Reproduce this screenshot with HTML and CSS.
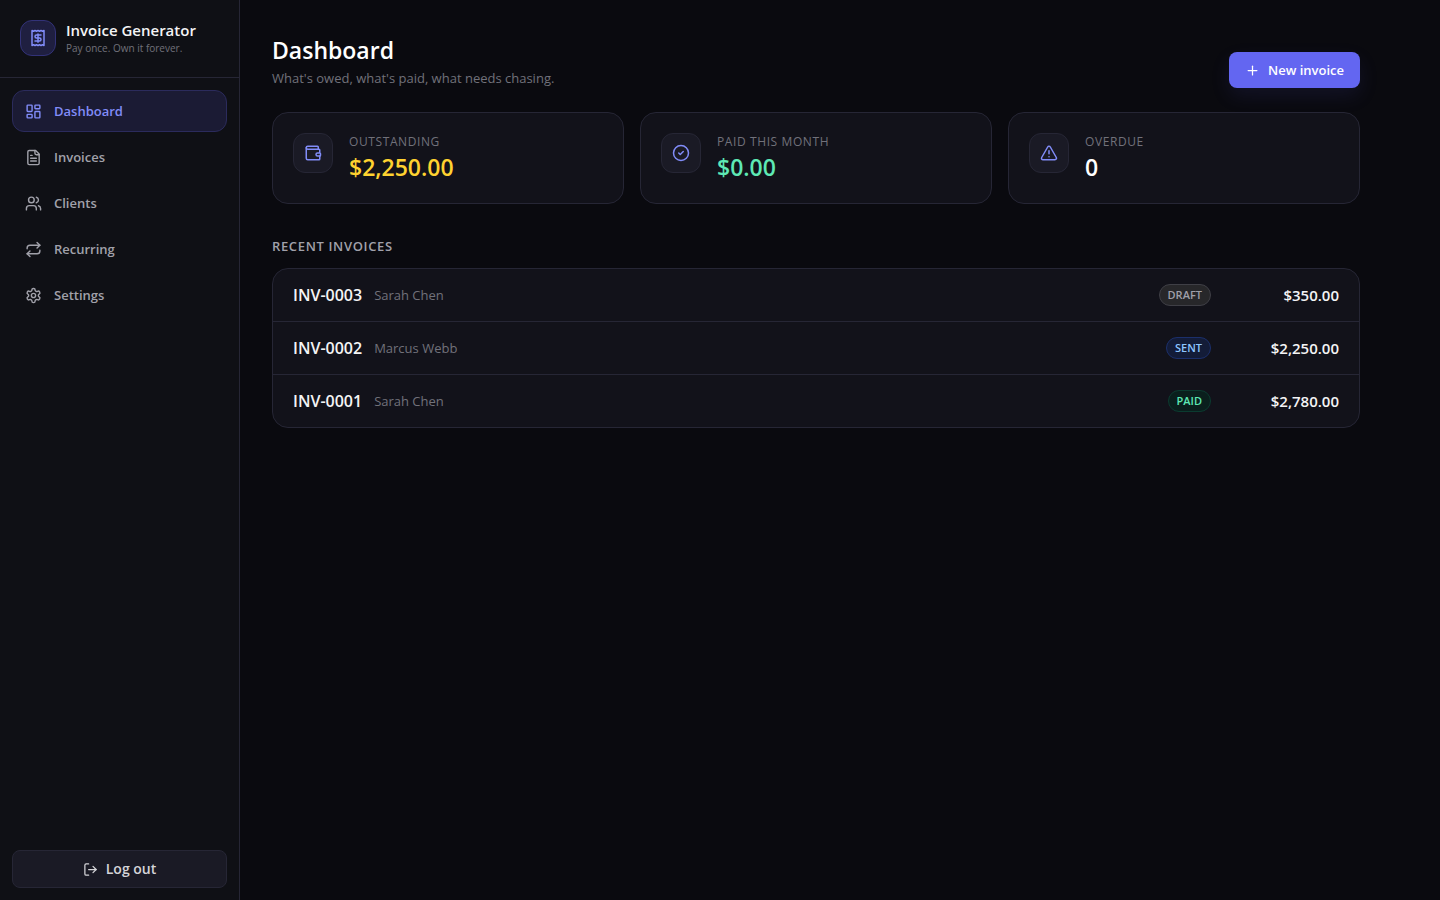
FILE: index.html
```html
<!DOCTYPE html>
<html lang="en">
<head>
  <meta charset="UTF-8" />
  <meta name="viewport" content="width=device-width, initial-scale=1" />
  <title>Dashboard - Invoice Generator</title>
  <link rel="stylesheet" href="styles.css">
</head>
<body>
  <div class="app">
    <aside class="sidebar">
      <div class="brand">
        <div class="brand-icon">
          <svg class="icon" width="18" height="18" viewBox="0 0 24 24"><path d="M4 2v20l2-1 2 1 2-1 2 1 2-1 2 1 2-1 2 1V2l-2 1-2-1-2 1-2-1-2 1-2-1-2 1Z"/><path d="M16 8h-6a2 2 0 1 0 0 4h4a2 2 0 1 1 0 4H8"/><path d="M12 17.5v-11"/></svg>
        </div>
        <div>
          <div class="brand-name">Invoice Generator</div>
          <div class="brand-tagline">Pay once. Own it forever.</div>
        </div>
      </div>

      <nav class="nav">
        <a href="#" class="nav-link active" aria-current="page">
          <svg class="icon" width="17" height="17" viewBox="0 0 24 24"><rect width="7" height="9" x="3" y="3" rx="1"/><rect width="7" height="5" x="14" y="3" rx="1"/><rect width="7" height="9" x="14" y="12" rx="1"/><rect width="7" height="5" x="3" y="16" rx="1"/></svg>
          Dashboard
        </a>
        <a href="#" class="nav-link">
          <svg class="icon" width="17" height="17" viewBox="0 0 24 24"><path d="M15 2H6a2 2 0 0 0-2 2v16a2 2 0 0 0 2 2h12a2 2 0 0 0 2-2V7Z"/><path d="M14 2v4a2 2 0 0 0 2 2h4"/><path d="M10 9H8"/><path d="M16 13H8"/><path d="M16 17H8"/></svg>
          Invoices
        </a>
        <a href="#" class="nav-link">
          <svg class="icon" width="17" height="17" viewBox="0 0 24 24"><path d="M16 21v-2a4 4 0 0 0-4-4H6a4 4 0 0 0-4 4v2"/><circle cx="9" cy="7" r="4"/><path d="M22 21v-2a4 4 0 0 0-3-3.87"/><path d="M16 3.13a4 4 0 0 1 0 7.75"/></svg>
          Clients
        </a>
        <a href="#" class="nav-link">
          <svg class="icon" width="17" height="17" viewBox="0 0 24 24"><path d="m17 2 4 4-4 4"/><path d="M3 11v-1a4 4 0 0 1 4-4h14"/><path d="m7 22-4-4 4-4"/><path d="M21 13v1a4 4 0 0 1-4 4H3"/></svg>
          Recurring
        </a>
        <a href="#" class="nav-link">
          <svg class="icon" width="17" height="17" viewBox="0 0 24 24"><path d="M12.22 2h-.44a2 2 0 0 0-2 2v.18a2 2 0 0 1-1 1.73l-.43.25a2 2 0 0 1-2 0l-.15-.08a2 2 0 0 0-2.73.73l-.22.38a2 2 0 0 0 .73 2.73l.15.1a2 2 0 0 1 1 1.72v.51a2 2 0 0 1-1 1.74l-.15.09a2 2 0 0 0-.73 2.73l.22.38a2 2 0 0 0 2.73.73l.15-.08a2 2 0 0 1 2 0l.43.25a2 2 0 0 1 1 1.73V20a2 2 0 0 0 2 2h.44a2 2 0 0 0 2-2v-.18a2 2 0 0 1 1-1.73l.43-.25a2 2 0 0 1 2 0l.15.08a2 2 0 0 0 2.73-.73l.22-.39a2 2 0 0 0-.73-2.73l-.15-.08a2 2 0 0 1-1-1.74v-.5a2 2 0 0 1 1-1.74l.15-.09a2 2 0 0 0 .73-2.73l-.22-.38a2 2 0 0 0-2.73-.73l-.15.08a2 2 0 0 1-2 0l-.43-.25a2 2 0 0 1-1-1.73V4a2 2 0 0 0-2-2z"/><circle cx="12" cy="12" r="3"/></svg>
          Settings
        </a>
      </nav>

      <div class="sidebar-footer">
        <button type="button" class="btn btn-secondary">
          <svg class="icon" width="15" height="15" viewBox="0 0 24 24"><path d="M9 21H5a2 2 0 0 1-2-2V5a2 2 0 0 1 2-2h4"/><path d="m16 17 5-5-5-5"/><path d="M21 12H9"/></svg>
          Log out
        </button>
      </div>
    </aside>

    <main class="main">
      <header class="page-header">
        <div>
          <h1>Dashboard</h1>
          <p class="subtitle">What's owed, what's paid, what needs chasing.</p>
        </div>
        <button type="button" class="btn btn-primary">
          <svg class="icon" width="15" height="15" viewBox="0 0 24 24"><path d="M5 12h14"/><path d="M12 5v14"/></svg>
          New invoice
        </button>
      </header>

      <section class="stats">
        <div class="stat-card">
          <div class="stat-icon">
            <svg class="icon" width="18" height="18" viewBox="0 0 24 24"><path d="M19 7V4a1 1 0 0 0-1-1H5a2 2 0 0 0 0 4h15a1 1 0 0 1 1 1v4h-3a2 2 0 0 0 0 4h3a1 1 0 0 0 1-1v-2a1 1 0 0 0-1-1"/><path d="M3 5v14a2 2 0 0 0 2 2h15a1 1 0 0 0 1-1v-4"/></svg>
          </div>
          <div>
            <div class="stat-label">Outstanding</div>
            <div class="stat-value amber">$2,250.00</div>
          </div>
        </div>
        <div class="stat-card">
          <div class="stat-icon">
            <svg class="icon" width="18" height="18" viewBox="0 0 24 24"><circle cx="12" cy="12" r="10"/><path d="m9 12 2 2 4-4"/></svg>
          </div>
          <div>
            <div class="stat-label">Paid this month</div>
            <div class="stat-value green">$0.00</div>
          </div>
        </div>
        <div class="stat-card">
          <div class="stat-icon">
            <svg class="icon" width="18" height="18" viewBox="0 0 24 24"><path d="m21.73 18-8-14a2 2 0 0 0-3.48 0l-8 14A2 2 0 0 0 4 21h16a2 2 0 0 0 1.73-3"/><path d="M12 9v4"/><path d="M12 17h.01"/></svg>
          </div>
          <div>
            <div class="stat-label">Overdue</div>
            <div class="stat-value">0</div>
          </div>
        </div>
      </section>

      <h2>Recent invoices</h2>
      <div class="invoice-list">
        <a href="#" class="invoice-row">
          <span class="invoice-number">INV-0003</span>
          <span class="invoice-client">Sarah Chen</span>
          <span class="badge badge-draft">Draft</span>
          <span class="invoice-total">$350.00</span>
        </a>
        <a href="#" class="invoice-row">
          <span class="invoice-number">INV-0002</span>
          <span class="invoice-client">Marcus Webb</span>
          <span class="badge badge-sent">Sent</span>
          <span class="invoice-total">$2,250.00</span>
        </a>
        <a href="#" class="invoice-row">
          <span class="invoice-number">INV-0001</span>
          <span class="invoice-client">Sarah Chen</span>
          <span class="badge badge-paid">Paid</span>
          <span class="invoice-total">$2,780.00</span>
        </a>
      </div>
    </main>
  </div>
</body>
</html>
```

FILE: styles.css
```css
* {
  box-sizing: border-box;
}

body {
  margin: 0;
  background: #0a0a0f;
  color: #f4f4f5;
  font-family: 'Segoe UI', 'Open Sans', 'Noto Sans', sans-serif;
  font-size: 13px;
  line-height: 20px;
}

h1, h2, p {
  margin: 0;
}

a {
  color: inherit;
  text-decoration: none;
}

.icon {
  flex-shrink: 0;
  fill: none;
  stroke: currentColor;
  stroke-width: 2;
  stroke-linecap: round;
  stroke-linejoin: round;
}

.app {
  display: flex;
  min-height: 100vh;
}

/* Sidebar */
.sidebar {
  display: flex;
  flex-direction: column;
  flex-shrink: 0;
  width: 240px;
  background: #0f1015;
  border-right: 1px solid #262635;
}

.brand {
  display: flex;
  align-items: flex-start;
  gap: 10px;
  padding: 20px;
  border-bottom: 1px solid #262635;
}

.brand-icon {
  display: flex;
  align-items: center;
  justify-content: center;
  width: 36px;
  height: 36px;
  color: #818cf8;
  background: #1f1f40;
  border: 1px solid #323278;
  border-radius: 12px;
}

.brand-name {
  font-size: 15px;
  font-weight: 600;
  line-height: 20px;
}

.brand-tagline {
  color: #71717a;
  font-size: 10px;
  line-height: 17px;
}

.nav {
  display: flex;
  flex: 1;
  flex-direction: column;
  gap: 4px;
  padding: 12px;
}

.nav-link {
  display: flex;
  align-items: center;
  gap: 12px;
  height: 42px;
  padding: 0 12px;
  color: #a1a1aa;
  font-weight: 600;
  border: 1px solid transparent;
  border-radius: 12px;
}

.nav-link.active {
  color: #818cf8;
  background: #1b1b34;
  border-color: #2b2b5c;
}

.sidebar-footer {
  padding: 12px;
}

.btn {
  display: flex;
  align-items: center;
  justify-content: center;
  gap: 8px;
  padding: 8px 16px;
  font-family: inherit;
  font-size: 13px;
  font-weight: 600;
  line-height: 20px;
  border: none;
  border-radius: 8px;
  cursor: pointer;
}

.btn-primary {
  color: #fff;
  background: #6366f1;
  box-shadow: 0 8px 20px rgba(99, 102, 241, 0.1);
}

.btn-secondary {
  width: 100%;
  color: #d4d4d8;
  font-size: 14px;
  background: #1a1a25;
  border: 1px solid #262635;
}

/* Main */
.main {
  flex: 1;
  max-width: 1152px;
  padding: 32px;
}

.page-header {
  display: flex;
  align-items: flex-end;
  justify-content: space-between;
  margin-bottom: 24px;
}

h1 {
  color: #fff;
  font-size: 23px;
  font-weight: 600;
  line-height: 36px;
}

.subtitle {
  color: #71717a;
}

.stats {
  display: grid;
  grid-template-columns: repeat(3, 1fr);
  gap: 16px;
  margin-bottom: 32px;
}

.stat-card {
  display: flex;
  align-items: flex-start;
  gap: 16px;
  padding: 20px;
  background: #12121a;
  border: 1px solid #262635;
  border-radius: 16px;
}

.stat-icon {
  display: flex;
  align-items: center;
  justify-content: center;
  width: 40px;
  height: 40px;
  color: #818cf8;
  background: #1a1a25;
  border: 1px solid #262635;
  border-radius: 12px;
}

.stat-label {
  color: #71717a;
  font-size: 12px;
  font-weight: 500;
  line-height: 18px;
  letter-spacing: 0.05em;
  text-transform: uppercase;
}

.stat-value {
  color: #fff;
  font-size: 23px;
  font-weight: 600;
  line-height: 32px;
}

.amber {
  color: #ffd230;
}

.green {
  color: #5ee9b5;
}

h2 {
  margin-bottom: 12px;
  color: #a1a1aa;
  font-size: 13px;
  font-weight: 600;
  line-height: 20px;
  letter-spacing: 0.05em;
  text-transform: uppercase;
}

.invoice-list {
  overflow: hidden;
  background: #12121a;
  border: 1px solid #262635;
  border-radius: 16px;
}

.invoice-row {
  display: flex;
  align-items: center;
  gap: 12px;
  padding: 16px 20px;
  border-bottom: 1px solid #262635;
}

.invoice-row:last-child {
  border-bottom: none;
}

.invoice-number {
  font-size: 16px;
  font-weight: 600;
}

.invoice-client {
  flex: 1;
  color: #71717a;
}

.badge {
  margin: -1px 0;
  padding: 2px 8px;
  font-size: 11px;
  font-weight: 600;
  line-height: 16px;
  text-transform: uppercase;
  border: 1px solid;
  border-radius: 11px;
}

.badge-draft {
  color: #9f9fa9;
  background: #27272a;
  border-color: #3f3f46;
}

.badge-sent {
  color: #8ec5ff;
  background: #131c38;
  border-color: #1b2f6b;
}

.badge-paid {
  color: #5ee9b5;
  background: #0a1f1d;
  border-color: #0b3b30;
}

.invoice-total {
  width: 116px;
  font-size: 15px;
  font-weight: 600;
  text-align: right;
}
```
